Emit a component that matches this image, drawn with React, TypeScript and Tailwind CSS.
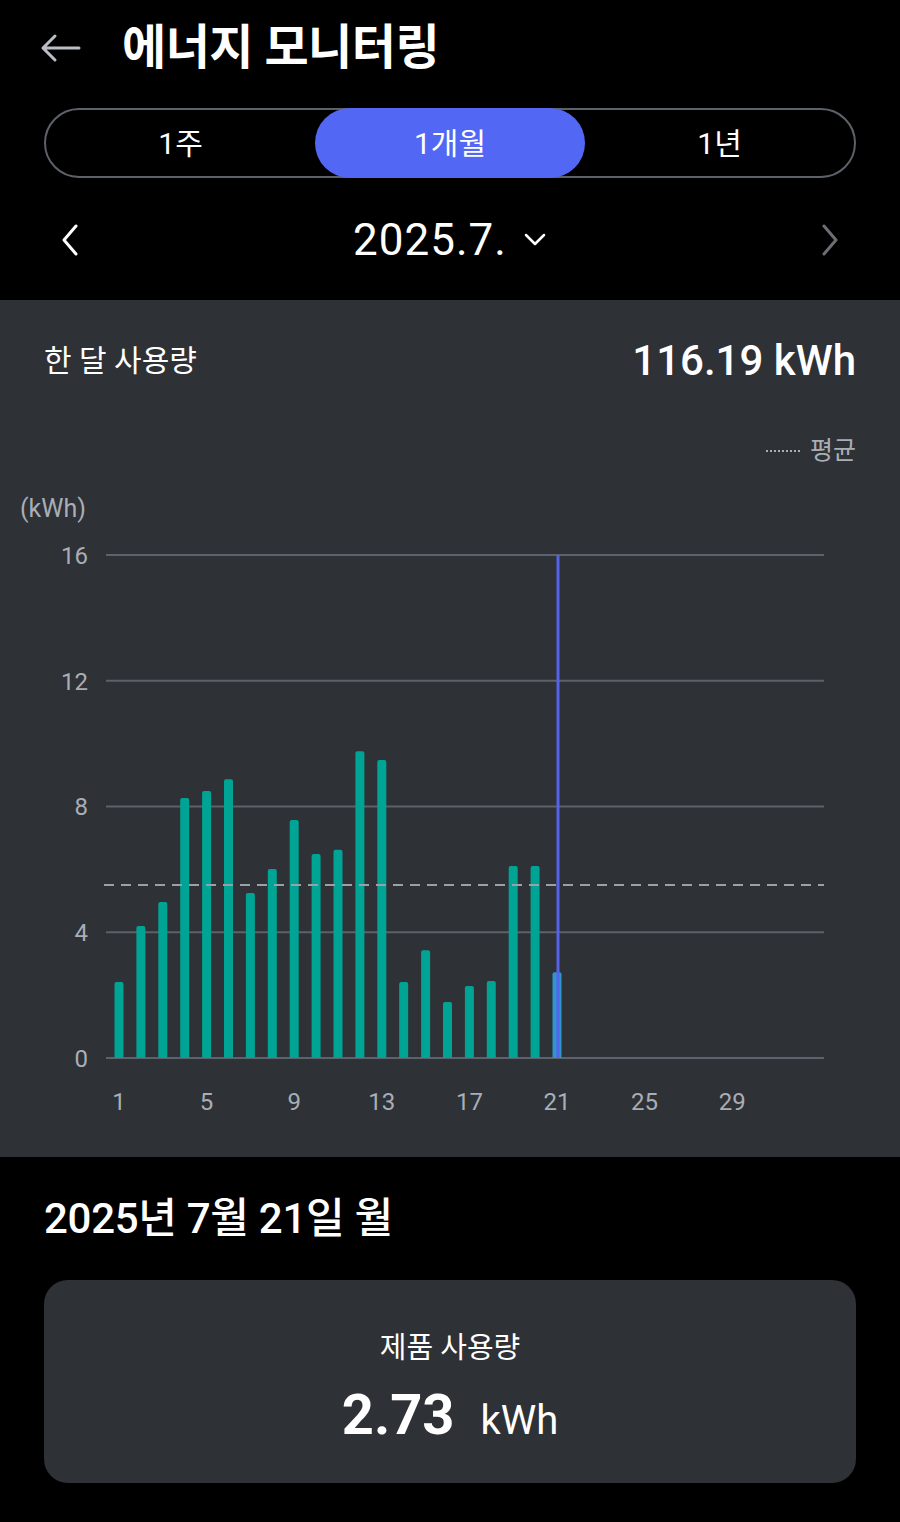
import React from 'react';

const FONT = 'font-[Roboto,"Noto_Sans_CJK_KR",sans-serif]';

// daily usage (kWh) for July, up to the 21st
const usage = [
  2.42, 4.2, 4.96, 8.27, 8.49, 8.87, 5.25, 6.01, 7.57, 6.49, 6.62, 9.76, 9.48,
  2.42, 3.43, 1.78, 2.29, 2.45, 6.11, 6.11, 2.73,
];

const SCALE = 31.44; // px per kWh
const BASE = 587; // y of the 0 line inside the svg
const dayX = (d: number) => 119 + (d - 1) * 21.9;

function UsageChart() {
  const avg = 5.5;
  return (
    <svg width={900} height={685} className="block">
      <text x={20} y={46} fontSize={25} fill="#a9aeb6">
        (kWh)
      </text>
      {[16, 12, 8, 4, 0].map((v) => {
        const y = BASE - v * SCALE;
        return (
          <g key={v}>
            <text x={88} y={y + 9} fontSize={24} fill="#a9aeb6" textAnchor="end">
              {v}
            </text>
            <line x1={106} x2={824} y1={y} y2={y} stroke="#5c626b" strokeWidth={2} />
          </g>
        );
      })}
      {usage.map((v, i) => {
        const h = v * SCALE;
        const x = dayX(i + 1) - 4.5;
        return (
          <path
            key={i}
            d={`M${x} ${BASE} V${BASE - h + 2} Q${x} ${BASE - h} ${x + 2} ${BASE - h} H${x + 7} Q${x + 9} ${BASE - h} ${x + 9} ${BASE - h + 2} V${BASE} Z`}
            fill={i === 20 ? '#2f95cc' : '#00a495'}
          />
        );
      })}
      <line
        x1={104}
        x2={824}
        y1={BASE - avg * SCALE}
        y2={BASE - avg * SCALE}
        stroke="#9aa0a8"
        strokeWidth={2}
        strokeDasharray="10 7"
      />
      <line x1={558} x2={558} y1={BASE - 16 * SCALE} y2={BASE} stroke="#5563ea" strokeWidth={3} />
      {[1, 5, 9, 13, 17, 21, 25, 29].map((d) => (
        <text key={d} x={dayX(d)} y={639} fontSize={24} fill="#a9aeb6" textAnchor="middle">
          {d}
        </text>
      ))}
    </svg>
  );
}

export default function App() {
  return (
    <div className={`w-[900px] h-[1522px] bg-black text-white ${FONT}`}>
      {/* header */}
      <div className="h-[92px] pt-[4px] flex items-center pl-[40px]">
        <svg width="42" height="30" viewBox="0 0 42 30" fill="none" stroke="#b9bec6" strokeWidth="3" strokeLinecap="round" strokeLinejoin="round">
          <path d="M39 15H3M15 3L3 15l12 12" />
        </svg>
        <h1 className="ml-[40px] text-[48px] font-bold tracking-[-0.5px] leading-none">에너지 모니터링</h1>
      </div>

      {/* period tabs */}
      <div className="mx-[44px] mt-[16px] h-[70px] rounded-full border-2 border-[#5d6168] flex items-center">
        <div className="flex-1 text-center text-[30px]">1주</div>
        <div className="w-[270px] h-[70px] -my-[2px] rounded-full bg-[#5367f5] flex items-center justify-center text-[30px]">
          1개월
        </div>
        <div className="flex-1 text-center text-[30px]">1년</div>
      </div>

      {/* month selector */}
      <div className="h-[122px] pt-[22px] pb-[20px] px-[58px] flex items-center justify-between">
        <svg width="24" height="36" viewBox="0 0 24 36" fill="none" stroke="#ffffff" strokeWidth="3" strokeLinecap="round" strokeLinejoin="round">
          <path d="M18 4L6 18l12 14" />
        </svg>
        <div className="flex items-center gap-[16px]">
          <span className="text-[44px] leading-none tracking-[1px]">2025.7.</span>
          <svg width="24" height="16" viewBox="0 0 24 16" fill="none" stroke="#ffffff" strokeWidth="2.5" strokeLinecap="round" strokeLinejoin="round">
            <path d="M3 3l9 9 9-9" />
          </svg>
        </div>
        <svg width="24" height="36" viewBox="0 0 24 36" fill="none" stroke="#6b6e73" strokeWidth="3" strokeLinecap="round" strokeLinejoin="round">
          <path d="M6 4l12 14L6 32" />
        </svg>
      </div>

      {/* chart panel */}
      <div className="h-[857px] bg-[#2e3135]">
        <div className="px-[44px] pt-[30px] h-[90px] flex items-center justify-between">
          <span className="text-[30px]">한 달 사용량</span>
          <span className="text-[42px] font-medium">116.19 kWh</span>
        </div>
        <div className="px-[44px] mt-[41px] h-[40px] flex items-center justify-end gap-[10px] text-[#a9aeb6]">
          <span className="w-[34px] border-t-2 border-dotted border-[#a9aeb6]" />
          <span className="text-[25px]">평균</span>
        </div>
        <UsageChart />
      </div>

      {/* selected day */}
      <div className="px-[44px]">
        <div className="h-[123px] flex items-center text-[42px] font-medium tracking-[-0.3px]">2025년 7월 21일 월</div>
        <div className="h-[203px] pt-[14px] rounded-[24px] bg-[#2e3135] flex flex-col items-center justify-center">
          <div className="text-[29px] leading-none">제품 사용량</div>
          <div className="mt-[24px] flex items-baseline gap-[26px] leading-none">
            <span className="text-[56px] font-bold">2.73</span>
            <span className="text-[40px]">kWh</span>
          </div>
        </div>
      </div>
    </div>
  );
}
